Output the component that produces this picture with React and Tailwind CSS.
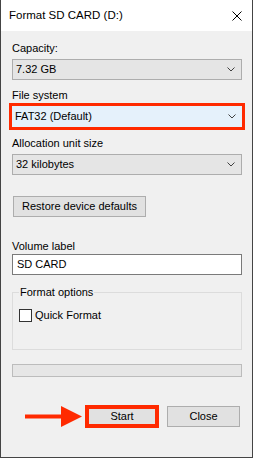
import React from "react";

const Chevron = () => (
  <svg width="8" height="5" viewBox="0 0 8 5" className="shrink-0">
    <path d="M0.5 0.5 L4 4 L7.5 0.5" fill="none" stroke="#404040" strokeWidth="1" />
  </svg>
);

const Combo = ({ value }) => (
  <div className="h-[21px] flex items-center justify-between pl-[3px] pr-[6px] border bg-[#e5e5e5] border-[#adadad]">
    <span>{value}</span>
    <Chevron />
  </div>
);

const Label = ({ children, className = "" }) => (
  <div className={`h-[15px] leading-[15px] ${className}`}>{children}</div>
);

export default function App() {
  return (
    <div className="w-[253px] h-[458px] flex flex-col bg-[#f0f0f0] border-x border-b border-[#444444] font-['Liberation_Sans',Arial,sans-serif] text-[11px] text-black">
      {/* title bar */}
      <div className="h-[31px] shrink-0 bg-white flex items-center justify-between pl-[8px] pr-[10px]">
        <span className="text-[11.5px]">Format SD CARD (D:)</span>
        <svg width="10" height="10" viewBox="0 0 10 10">
          <path d="M0.5 0.5 L9.5 9.5 M9.5 0.5 L0.5 9.5" stroke="#000" strokeWidth="1" />
        </svg>
      </div>

      <div className="flex flex-col pl-[11px] pr-[10px]">
        <Label className="mt-[10px]">Capacity:</Label>
        <div className="mt-[3px]">
          <Combo value="7.32 GB" />
        </div>

        <Label className="mt-[8px]">File system</Label>
        <div className="-mx-[3px] border-[3px] border-[#ff2a00]">
          <div className="h-[21px] flex items-center justify-between pl-[3px] pr-[6px] bg-[#e5f1fb]">
            <span>FAT32 (Default)</span>
            <Chevron />
          </div>
        </div>

        <Label className="mt-[6px]">Allocation unit size</Label>
        <div className="mt-[3px]">
          <Combo value="32 kilobytes" />
        </div>

        <button className="mt-[21px] ml-[1px] w-[133px] h-[21px] flex items-center justify-center bg-[#e1e1e1] border border-[#adadad]">
          Restore device defaults
        </button>

        <Label className="mt-[22px]">Volume label</Label>
        <div className="h-[21px] flex items-center pl-[4px] bg-white border border-[#7a7a7a]">
          SD CARD
        </div>

        <fieldset className="mt-[10px] h-[65px] border border-[#dcdcdc] pl-[6px]">
          <legend className="px-[1px] leading-[15px]">Format options</legend>
          <label className="mt-[8px] flex items-center gap-[3px]">
            <span className="w-[13px] h-[13px] bg-white border border-[#333333]" />
            <span className="leading-[15px]">Quick Format</span>
          </label>
        </fieldset>

        <div className="mt-[14px] h-[13px] bg-[#e6e6e6] border border-[#bcbcbc]" />

        <div className="mt-[28px] flex items-center">
          <svg width="58" height="21" viewBox="0 0 58 21" className="ml-[13px]">
            <rect x="0" y="8.5" width="38" height="4" fill="#ff2a00" />
            <polygon points="36,0 57,10.5 36,21" fill="#ff2a00" />
          </svg>
          <button className="ml-[2px] w-[74px] h-[23px] border-[4px] border-[#ff2a00] bg-[#e1e1e1] flex items-center justify-center">
            Start
          </button>
          <button className="ml-[8px] w-[73px] h-[21px] border border-[#adadad] bg-[#e1e1e1] flex items-center justify-center">
            Close
          </button>
        </div>
      </div>
    </div>
  );
}
